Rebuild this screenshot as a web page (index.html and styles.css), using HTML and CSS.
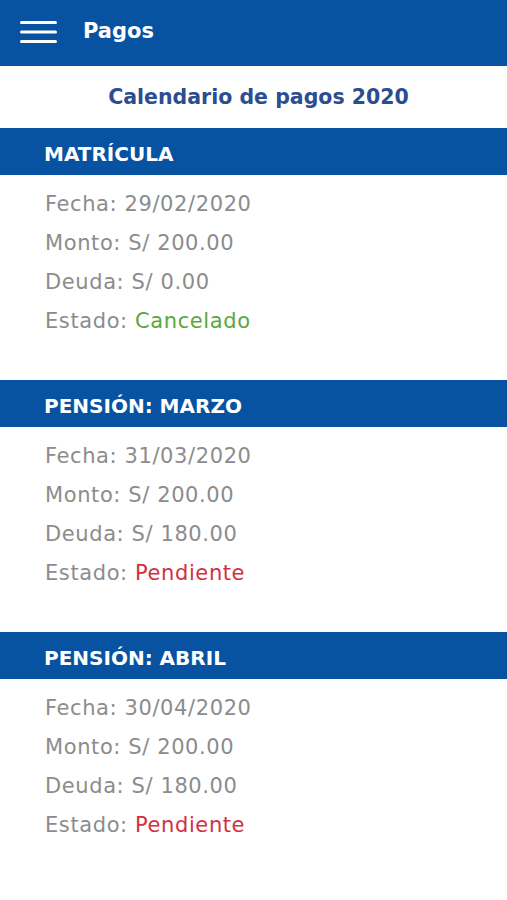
FILE: index.html
```html
<!DOCTYPE html>
<html lang="es">
<head>
<meta charset="utf-8">
<title>Pagos</title>
<link rel="stylesheet" href="styles.css">
</head>
<body>
<header class="appbar">
  <svg class="menu" width="37" height="26" viewBox="0 0 37 26" aria-hidden="true">
    <rect x="0" y="2" width="37" height="3" rx="1.5" fill="#fff"/>
    <rect x="0" y="11.5" width="37" height="3" rx="1.5" fill="#fff"/>
    <rect x="0" y="21" width="37" height="3" rx="1.5" fill="#fff"/>
  </svg>
  <span class="appbar-title">Pagos</span>
</header>
<h1 class="page-title">Calendario de pagos 2020</h1>

<section class="pago">
  <h2 class="pago-head">MATRÍCULA</h2>
  <ul class="pago-rows">
    <li>Fecha: 29/02/2020</li>
    <li>Monto: S/ 200.00</li>
    <li>Deuda: S/ 0.00</li>
    <li>Estado: <span class="ok">Cancelado</span></li>
  </ul>
</section>

<section class="pago">
  <h2 class="pago-head">PENSIÓN: MARZO</h2>
  <ul class="pago-rows">
    <li>Fecha: 31/03/2020</li>
    <li>Monto: S/ 200.00</li>
    <li>Deuda: S/ 180.00</li>
    <li>Estado: <span class="pend">Pendiente</span></li>
  </ul>
</section>

<section class="pago">
  <h2 class="pago-head">PENSIÓN: ABRIL</h2>
  <ul class="pago-rows">
    <li>Fecha: 30/04/2020</li>
    <li>Monto: S/ 200.00</li>
    <li>Deuda: S/ 180.00</li>
    <li>Estado: <span class="pend">Pendiente</span></li>
  </ul>
</section>
</body>
</html>
```

FILE: styles.css
```css
* { box-sizing: border-box; }
html, body { margin: 0; padding: 0; background: #fff; }
body {
  font-family: "DejaVu Sans", "Open Sans", sans-serif;
  width: 507px;
}
.appbar {
  height: 66px;
  background: #0753a1;
  display: flex;
  align-items: center;
  padding-left: 20px;
  gap: 26px;
}
.menu { display: block; margin-top: -2px; }
.appbar-title {
  color: #fff;
  font-size: 21px;
  font-weight: 700;
  margin-top: -4px;
}
.page-title {
  margin: 0;
  height: 62px;
  display: flex;
  align-items: center;
  justify-content: center;
  padding-left: 10px;
  color: #2c4d8e;
  font-size: 20.5px;
  font-weight: 700;
}
.pago { padding-bottom: 39px; }
.pago-head {
  margin: 0;
  height: 47px;
  display: flex;
  align-items: center;
  padding: 4px 0 0 44px;
  background: #0753a1;
  color: #fff;
  font-size: 20px;
  font-weight: 700;
}
.pago-rows {
  list-style: none;
  margin: 0;
  padding: 10px 0 0 45px;
}
.pago-rows li {
  height: 39px;
  line-height: 39px;
  font-size: 21px;
  letter-spacing: 0.6px;
  color: #8c8c8c;
}
.ok { color: #5aa83a; }
.pend { color: #d2303c; }
```
